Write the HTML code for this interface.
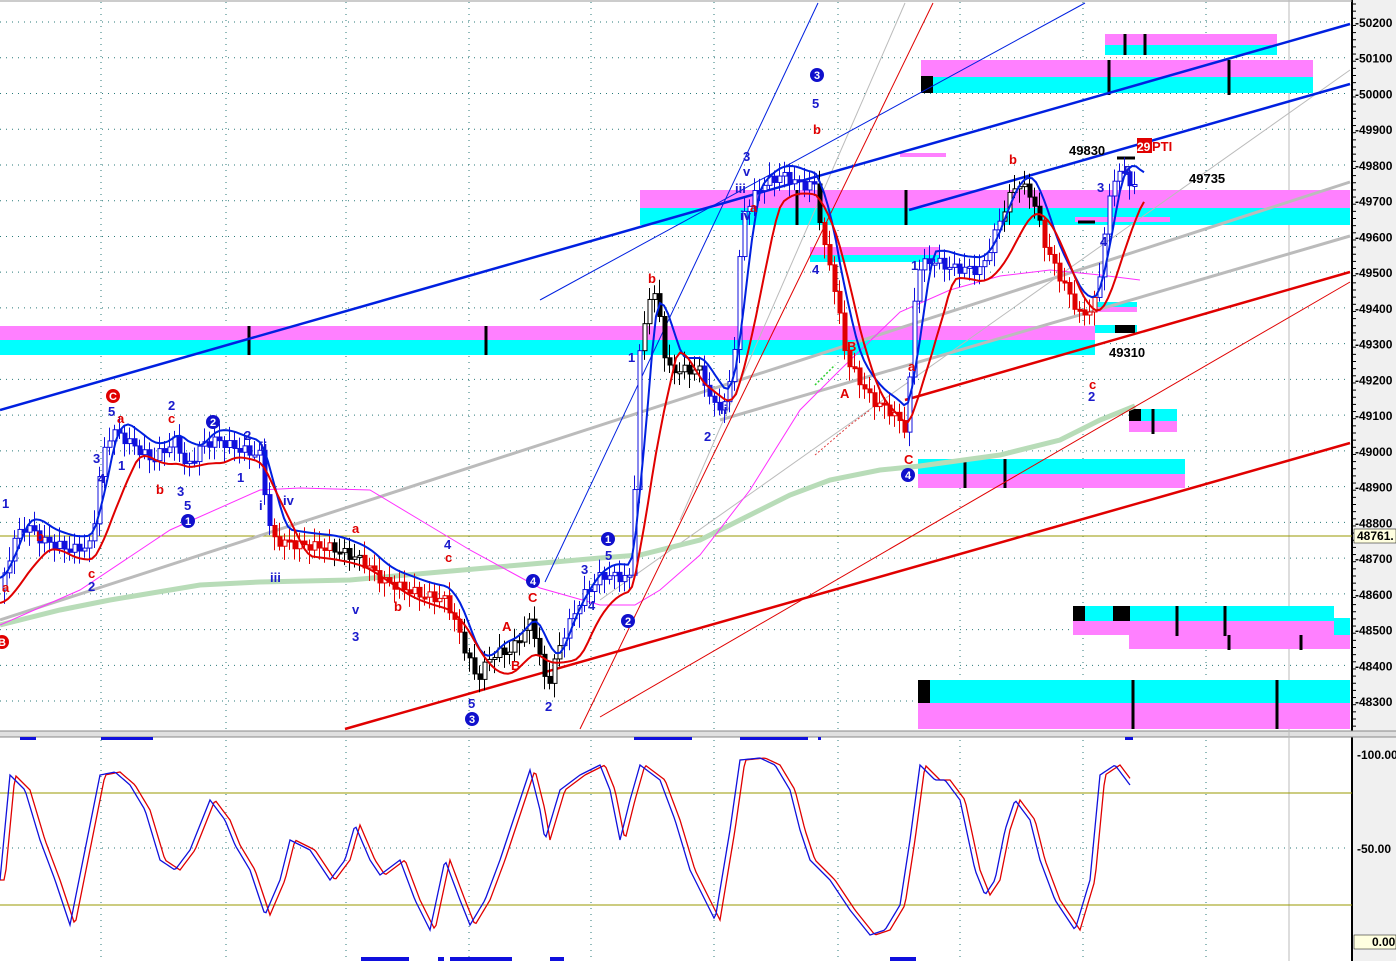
<!DOCTYPE html>
<html><head><meta charset="utf-8">
<style>
html,body{margin:0;padding:0;background:#fff;width:1396px;height:961px;overflow:hidden}
svg{display:block;font-family:"Liberation Sans",Arial,sans-serif}
</style></head>
<body>
<svg id="s" width="1396" height="961" viewBox="0 0 1396 961" xmlns="http://www.w3.org/2000/svg">
<rect x="0" y="0" width="1396" height="961" fill="#fff"/>
<rect x="1352" y="0" width="44" height="961" fill="#f0f0f0"/>
<line x1="1352" y1="0" x2="1352" y2="961" stroke="#000" stroke-width="2"/>
<line x1="0" y1="1" x2="1352" y2="1" stroke="#999"/>
<rect x="0" y="731" width="1396" height="6" fill="#e0e0e0"/>
<line x1="0" y1="731" x2="1396" y2="731" stroke="#888"/>
<line x1="0" y1="737" x2="1396" y2="737" stroke="#888"/>
<g id="grid" stroke="#2a7a7a" stroke-width="1" stroke-dasharray="1,5"></g>
<line x1="1289" y1="0" x2="1289" y2="961" stroke="#bbb"/>

<g>
<rect x="0" y="326" width="1095" height="14" fill="#ff80ff"/>
<rect x="0" y="340" width="1095" height="15" fill="#00ffff"/>
<rect x="640" y="190" width="710" height="18" fill="#ff80ff"/>
<rect x="640" y="208" width="710" height="17" fill="#00ffff"/>
<rect x="921" y="60" width="392" height="17" fill="#ff80ff"/>
<rect x="921" y="77" width="392" height="16" fill="#00ffff"/>
<rect x="921" y="76" width="12" height="17" fill="#000"/>
<rect x="1105" y="34" width="172" height="11" fill="#ff80ff"/>
<rect x="1105" y="45" width="172" height="10" fill="#00ffff"/>
<rect x="810" y="247" width="130" height="8" fill="#ff80ff"/>
<rect x="810" y="255" width="130" height="7" fill="#00ffff"/>
<rect x="1075" y="217" width="95" height="5" fill="#ff80ff"/>
<rect x="1095" y="302" width="42" height="5" fill="#00ffff"/>
<rect x="1095" y="307" width="42" height="5" fill="#ff80ff"/>
<rect x="1095" y="325" width="42" height="8" fill="#00ffff"/>
<rect x="918" y="459" width="267" height="15" fill="#00ffff"/>
<rect x="918" y="474" width="267" height="14" fill="#ff80ff"/>
<rect x="1129" y="409" width="48" height="12" fill="#00ffff"/>
<rect x="1129" y="421" width="48" height="11" fill="#ff80ff"/>
<rect x="1129" y="409" width="12" height="12" fill="#000"/>
<rect x="1073" y="606" width="261" height="15" fill="#00ffff"/>
<rect x="1073" y="621" width="261" height="14" fill="#ff80ff"/>
<rect x="1129" y="635" width="221" height="14" fill="#ff80ff"/>
<rect x="1334" y="618" width="16" height="17" fill="#00ffff"/>
<rect x="1073" y="606" width="12" height="15" fill="#000"/>
<rect x="1113" y="606" width="17" height="15" fill="#000"/>
<rect x="918" y="680" width="432" height="23" fill="#00ffff"/>
<rect x="918" y="703" width="432" height="26" fill="#ff80ff"/>
<rect x="918" y="680" width="12" height="23" fill="#000"/>
<rect x="900" y="153" width="46" height="4" fill="#ff80ff"/>
</g>
<g stroke="#000" stroke-width="3">
<line x1="249" y1="326" x2="249" y2="355"/><line x1="486" y1="326" x2="486" y2="355"/>
<line x1="797" y1="190" x2="797" y2="225"/><line x1="906" y1="190" x2="906" y2="225"/>
<line x1="1109" y1="60" x2="1109" y2="95"/><line x1="1229" y1="60" x2="1229" y2="95"/>
<line x1="1125" y1="34" x2="1125" y2="55"/><line x1="1145" y1="34" x2="1145" y2="55"/>
<line x1="965" y1="459" x2="965" y2="488"/><line x1="1005" y1="459" x2="1005" y2="488"/>
<line x1="1153" y1="409" x2="1153" y2="434"/>
<line x1="1177" y1="606" x2="1177" y2="636"/><line x1="1225" y1="606" x2="1225" y2="636"/>
<line x1="1229" y1="635" x2="1229" y2="650"/><line x1="1301" y1="635" x2="1301" y2="650"/>
<line x1="1133" y1="680" x2="1133" y2="729"/><line x1="1277" y1="680" x2="1277" y2="729"/>
<line x1="1078" y1="222" x2="1095" y2="222"/><line x1="1117" y1="158" x2="1135" y2="158"/>
<line x1="1115" y1="329" x2="1135" y2="329" stroke-width="8"/>
</g>
<line x1="0" y1="536" x2="1352" y2="536" stroke="#999900" stroke-width="1"/>
<line x1="0" y1="620" x2="1350" y2="182" stroke="#bbb" stroke-width="3"/>
<line x1="720" y1="420" x2="1350" y2="236" stroke="#bbb" stroke-width="3"/>
<line x1="600" y1="600" x2="1350" y2="70" stroke="#bbb" stroke-width="1"/>
<line x1="680" y1="520" x2="905" y2="3" stroke="#bbb" stroke-width="1"/>
<polyline fill="none" stroke="#b8dcb8" stroke-width="5" points="0,625 60,610 110,600 200,585 260,582 350,580 440,572 520,565 600,558 640,555 700,540 740,520 790,495 830,480 880,470 920,466 1000,455 1060,440 1100,420 1135,406"/>
<polyline fill="none" stroke="#ff30ff" stroke-width="1" points="0,625 80,590 170,530 260,490 300,488 370,490 420,520 470,550 540,588 600,605 635,605 660,590 700,555 750,490 800,410 840,370 900,312 950,290 1000,276 1050,270 1100,275 1140,280"/>
<line x1="0" y1="410" x2="1350" y2="24" stroke="#0020e0" stroke-width="2.5"/>
<line x1="909" y1="210" x2="1350" y2="84" stroke="#0020e0" stroke-width="2.5"/>
<line x1="540" y1="300" x2="1085" y2="3" stroke="#0020e0" stroke-width="1"/>
<line x1="545" y1="582" x2="818" y2="3" stroke="#0020e0" stroke-width="1"/>
<line x1="345" y1="729" x2="1350" y2="443" stroke="#e00000" stroke-width="2.5"/>
<line x1="905" y1="400" x2="1350" y2="272" stroke="#e00000" stroke-width="2.5"/>
<line x1="580" y1="729" x2="933" y2="3" stroke="#e00000" stroke-width="1"/>
<line x1="600" y1="717" x2="1350" y2="282" stroke="#e00000" stroke-width="1"/>
<polyline fill="none" stroke="#e04040" stroke-width="1" stroke-dasharray="2,2" points="815,455 850,425 870,410"/>
<polyline fill="none" stroke="#30d030" stroke-width="1.5" stroke-dasharray="2,2" points="815,385 835,365"/>
<g id="cand"></g>
<g id="mas"></g>

<g font-size="13" font-weight="bold">
<g fill="#1a1acc">
<text x="2" y="508">1</text><text x="108" y="416">5</text><text x="93" y="463">3</text><text x="98" y="483">4</text><text x="118" y="470">1</text>
<text x="168" y="410">2</text><text x="177" y="496">3</text><text x="184" y="510">5</text><text x="244" y="440">2</text><text x="237" y="482">1</text>
<text x="260" y="451">ii</text><text x="283" y="505">iv</text><text x="270" y="582">iii</text><text x="259" y="510">i</text>
<text x="88" y="591">2</text><text x="352" y="614">v</text><text x="352" y="641">3</text><text x="444" y="549">4</text><text x="468" y="708">5</text>
<text x="545" y="711">2</text><text x="581" y="574">3</text><text x="605" y="560">5</text><text x="588" y="610">4</text><text x="628" y="362">1</text>
<text x="704" y="441">2</text><text x="720" y="414">ii</text><text x="743" y="161">3</text><text x="743" y="176">v</text><text x="735" y="193">iii</text><text x="740" y="220">iv</text>
<text x="812" y="108">5</text><text x="812" y="274">4</text><text x="911" y="270">1</text><text x="1097" y="192">3</text><text x="1100" y="246">4</text><text x="1124" y="175">5</text><text x="1088" y="401">2</text>
</g>
<g fill="#e00000">
<text x="2" y="592">a</text><text x="117" y="423">a</text><text x="168" y="423">c</text><text x="156" y="494">b</text><text x="88" y="578">c</text>
<text x="36" y="541">b</text><text x="352" y="533">a</text><text x="394" y="611">b</text><text x="445" y="562">c</text><text x="502" y="631">A</text><text x="511" y="670">B</text>
<text x="528" y="602">C</text><text x="648" y="283">b</text><text x="750" y="212">a</text><text x="813" y="134">b</text><text x="840" y="398">A</text><text x="847" y="351">B</text>
<text x="1009" y="164">b</text><text x="908" y="371">a</text><text x="904" y="464">C</text><text x="1089" y="389">c</text>
</g>
</g>
<g font-size="13" font-weight="bold" fill="#000">
<text x="1069" y="155">49830</text><text x="1189" y="183">49735</text><text x="1109" y="357">49310</text>
</g>
<rect x="1137" y="138" width="15" height="15" fill="#e00000"/>
<text x="1137" y="151" font-size="12" font-weight="bold" fill="#fff">29</text>
<text x="1152" y="151" font-size="13" font-weight="bold" fill="#e00000">PTI</text>
<g font-size="11" font-weight="bold" text-anchor="middle">
<circle cx="113" cy="396" r="7" fill="#e00000"/><text x="113" y="400" fill="#fff">C</text>
<circle cx="2" cy="642" r="7" fill="#e00000"/><text x="2" y="646" fill="#fff">B</text>
<circle cx="213" cy="422" r="7" fill="#1010cc"/><text x="213" y="426" fill="#fff">2</text>
<circle cx="188" cy="521" r="7" fill="#1010cc"/><text x="188" y="525" fill="#fff">1</text>
<circle cx="472" cy="719" r="7" fill="#1010cc"/><text x="472" y="723" fill="#fff">3</text>
<circle cx="533" cy="581" r="7" fill="#1010cc"/><text x="533" y="585" fill="#fff">4</text>
<circle cx="608" cy="539" r="7" fill="#1010cc"/><text x="608" y="543" fill="#fff">1</text>
<circle cx="628" cy="621" r="7" fill="#1010cc"/><text x="628" y="625" fill="#fff">2</text>
<circle cx="817" cy="75" r="7" fill="#1010cc"/><text x="817" y="79" fill="#fff">3</text>
<circle cx="908" cy="475" r="7" fill="#1010cc"/><text x="908" y="479" fill="#fff">4</text>
</g>
<g id="ax" font-size="12" font-weight="bold" fill="#000"></g>
<rect x="1354" y="529" width="42" height="14" fill="#ffffe0" stroke="#000" stroke-width="0.5"/>
<text x="1357" y="540" font-size="12" font-weight="bold">48761.</text>
<line x1="0" y1="793" x2="1352" y2="793" stroke="#999900"/>
<line x1="0" y1="905" x2="1352" y2="905" stroke="#999900"/>
<text x="1357" y="759" font-size="12" font-weight="bold">-100.00</text>
<text x="1357" y="853" font-size="12" font-weight="bold">-50.00</text>
<rect x="1354" y="935" width="42" height="14" fill="#ffffe0" stroke="#000" stroke-width="0.5"/>
<text x="1372" y="946" font-size="12" font-weight="bold">0.00</text>
<g id="osc"></g>
<g fill="#1010dd">
<rect x="20" y="737" width="16" height="3"/><rect x="101" y="737" width="52" height="3"/><rect x="634" y="737" width="58" height="3"/><rect x="740" y="737" width="68" height="3"/><rect x="818" y="737" width="3" height="3"/><rect x="1125" y="737" width="8" height="3"/>
<rect x="361" y="957" width="48" height="4"/><rect x="438" y="957" width="6" height="4"/><rect x="450" y="957" width="62" height="4"/><rect x="550" y="957" width="14" height="4"/><rect x="890" y="957" width="26" height="4"/>
</g>
</svg>
<script>
var NS="http://www.w3.org/2000/svg";
function el(t,a,p){var e=document.createElementNS(NS,t);for(var k in a)e.setAttribute(k,a[k]);document.getElementById(p).appendChild(e);return e;}
var vx=[101,226,346,469,591,714,838,960,1083,1206];
vx.forEach(function(x){el("line",{x1:x,y1:2,x2:x,y2:731},"grid");el("line",{x1:x,y1:740,x2:x,y2:961},"grid");});
for(var i=0;i<20;i++){var y=22+i*35.74;el("line",{x1:0,y1:y,x2:1350,y2:y},"grid");
 var t=el("text",{x:1355,y:y+5},"ax");t.textContent="-"+(50200-i*100);}
[848].forEach(function(y){el("line",{x1:0,y1:y,x2:1350,y2:y},"grid");});
for(var y=4;y<731;y+=7.15){el("line",{x1:1352,y1:y,x2:1356,y2:y,stroke:"#000"},"ax");}
var P=[[0,590],[12,540],[25,525],[40,540],[70,550],[90,545],[100,460],[110,430],[125,440],[150,460],[175,440],[185,470],[200,445],[215,440],[240,450],[258,455],[270,540],[300,545],[330,548],[360,560],[380,580],[420,595],[445,600],[460,640],[475,680],[490,655],[510,650],[530,620],[545,688],[560,640],[580,598],[600,575],[630,578],[637,360],[648,295],[656,300],[665,370],[700,370],[710,405],[725,405],[735,330],[740,215],[760,185],[780,175],[800,185],[815,185],[820,240],[830,270],[845,360],[870,400],[890,412],[905,430],[915,268],[930,260],[950,268],[980,270],[1000,215],[1015,182],[1030,195],[1045,250],[1060,280],[1080,318],[1095,300],[1105,215],[1115,168],[1125,178],[1135,188]];
function interp(x){for(var i=1;i<P.length;i++){if(x<=P[i][0]){var a=P[i-1],b=P[i];return a[1]+(b[1]-a[1])*(x-a[0])/(b[0]-a[0]);}}return P[P.length-1][1];}
var prev=interp(0);
for(var x=3;x<=1135;x+=5){var c=interp(x)+Math.sin(x*1.7)*5,o=prev;prev=c;
 var up=c<o,col;
 if(x<270||(x>560&&x<640)||(x>700&&x<815)||(x>905&&x<1000)||x>1095)col="#1010dd";else if((x>270&&x<330)||(x>360&&x<460)||(x>820&&x<905)||(x>1040&&x<1095))col="#e00000";else col="#000";
 var hi=Math.min(c,o)-4-Math.abs(Math.sin(x))*10,lo=Math.max(c,o)+4+Math.abs(Math.cos(x))*10;
 el("line",{x1:x+1.5,y1:hi,x2:x+1.5,y2:lo,stroke:col},"cand");
 var h=Math.max(2,Math.abs(c-o));
 el("rect",{x:x,y:Math.min(c,o),width:4,height:h,fill:up?"#fff":col,stroke:col,"stroke-width":1},"cand");}
function ma(off,lag,col){var pts=[];for(var x=0;x<=1145;x+=4){var s=0,n=0;for(var k=0;k<=lag;k+=3){s+=interp(Math.max(0,x-k));n++;}pts.push(x+","+(s/n+off));}
 el("polyline",{points:pts.join(" "),fill:"none",stroke:col,"stroke-width":2},"mas");}
ma(-12,22,"#0020e0");ma(13,44,"#e00000");
var O=[[0,880],[10,775],[25,790],[40,840],[55,880],[70,925],[85,850],[100,775],[115,772],[130,785],[145,810],[160,860],[175,870],[190,850],[210,800],[225,820],[235,845],[250,870],[265,915],[280,880],[290,840],[310,850],[330,880],[345,860],[355,825],[370,860],[380,875],[400,860],[415,900],[430,930],[445,860],[460,900],[470,925],[485,900],[500,860],[510,830],[520,800],[530,770],[540,810],[545,840],[560,790],[580,775],[600,765],[610,790],[620,840],[630,800],[640,765],[660,780],[675,820],[690,870],[705,900],[715,920],[730,830],[740,760],[760,758],[775,765],[790,790],[800,830],[810,860],[830,880],[850,910],[870,935],[885,930],[900,905],[910,840],[920,765],[935,780],[945,780],[960,800],[975,870],[985,895],[995,880],[1005,830],[1015,800],[1030,820],[1040,860],[1055,900],[1075,930],[1090,880],[1100,775],[1115,765],[1130,785]];
function oi(x){for(var i=1;i<O.length;i++){if(x<=O[i][0]){var a=O[i-1],b=O[i];return a[1]+(b[1]-a[1])*(x-a[0])/(b[0]-a[0]);}}return O[O.length-1][1];}
var b=[],r=[];for(var x=0;x<=1130;x+=2){b.push(x+","+oi(x));r.push(x+","+oi(Math.max(0,x-5)));}
el("polyline",{points:r.join(" "),fill:"none",stroke:"#e00000","stroke-width":1.3},"osc");
el("polyline",{points:b.join(" "),fill:"none",stroke:"#1010dd","stroke-width":1.3},"osc");
</script>
</body></html>
